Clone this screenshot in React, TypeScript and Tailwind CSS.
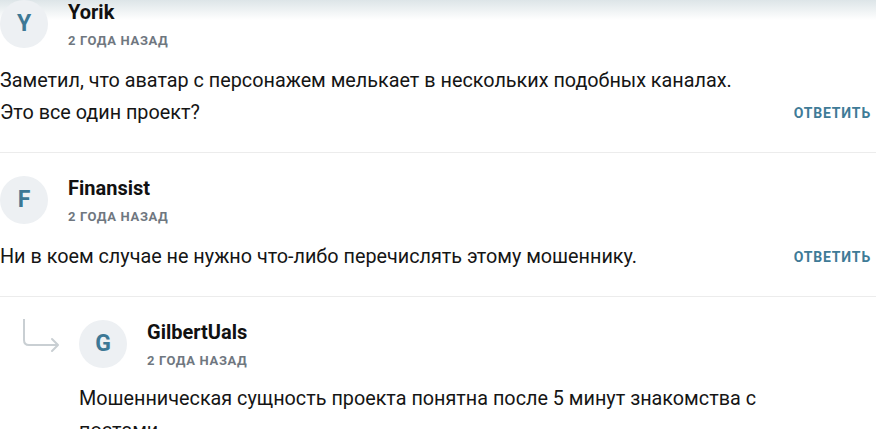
import type { ReactNode } from "react";

interface CommentData {
  id: string;
  author: string;
  ago: string;
  text: ReactNode;
  reply?: boolean;
}

const comments: CommentData[] = [
  {
    id: "c1",
    author: "Yorik",
    ago: "2 года назад",
    text: (
      <>
        Заметил, что аватар с персонажем мелькает в нескольких подобных каналах.
        <br />
        Это все один проект?
      </>
    ),
  },
  {
    id: "c2",
    author: "Finansist",
    ago: "2 года назад",
    text: "Ни в коем случае не нужно что-либо перечислять этому мошеннику.",
  },
  {
    id: "c3",
    author: "GilbertUals",
    ago: "2 года назад",
    text: "Мошенническая сущность проекта понятна после 5 минут знакомства с постами",
    reply: true,
  },
];

function ReplyArrow() {
  return (
    <svg width="40" height="36" viewBox="0 0 40 36" fill="none" className="mt-[-1px] ml-[23px]">
      <path
        d="M1 0 V21 Q1 26 6 26 H34"
        stroke="#c9cfd3"
        strokeWidth="2"
        strokeLinecap="round"
      />
      <path
        d="M29 20 L35 26 L29 32"
        stroke="#c9cfd3"
        strokeWidth="2"
        strokeLinecap="round"
        strokeLinejoin="round"
      />
    </svg>
  );
}

function Comment({ comment }: { comment: CommentData }) {
  return (
    <div className="flex pt-[23px] pb-[23px] border-b border-[#ececec] first:pt-0">
      {comment.reply ? (
        <div className="w-[79px] shrink-0">
          <ReplyArrow />
        </div>
      ) : null}
      <div className="min-w-0 flex-1">
        <div className="flex items-start gap-5">
          <div className="flex h-12 w-12 shrink-0 items-center justify-center rounded-full bg-[#edf0f3] text-[23px] font-bold text-[#3d7895]">
            {comment.author[0]}
          </div>
          <div>
            <div className="text-[20px] font-bold leading-6 text-[#111]">{comment.author}</div>
            <div className="mt-[9px] text-[13px] font-bold uppercase leading-4 tracking-[0.05em] text-[#6f7780]">
              {comment.ago}
            </div>
          </div>
        </div>
        <div className={`flex items-end gap-6 ${comment.reply ? "mt-[14px]" : "mt-4"}`}>
          <p className={`flex-1 text-[19.8px] leading-8 text-[#151515] ${comment.reply ? "max-w-[720px]" : ""}`}>
            {comment.text}
          </p>
          {!comment.reply ? (
            <button
              type="button"
              className="shrink-0 pr-[5px] text-[14px] font-bold uppercase leading-8 tracking-[0.06em] text-[#3f7b97]"
            >
              Ответить
            </button>
          ) : null}
        </div>
      </div>
    </div>
  );
}

export default function App() {
  return (
    <div
      className="relative h-[429px] w-[876px] overflow-hidden bg-white"
      style={{ fontFamily: "Roboto, 'Noto Sans', sans-serif" }}
    >
      <div className="pointer-events-none absolute inset-x-0 top-0 h-5 bg-linear-to-b from-[#dde5e8] to-transparent" />
      <div className="relative">
        {comments.map((comment) => (
          <Comment key={comment.id} comment={comment} />
        ))}
      </div>
    </div>
  );
}
